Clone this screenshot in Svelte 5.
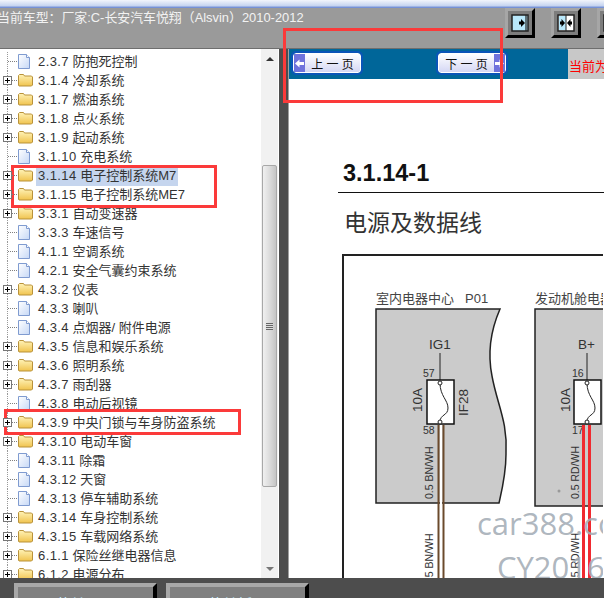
<script lang="ts">
  const rows = [
    { n: '2.3.7', t: '防抱死控制', doc: true },
    { n: '3.1.4', t: '冷却系统' },
    { n: '3.1.7', t: '燃油系统' },
    { n: '3.1.8', t: '点火系统' },
    { n: '3.1.9', t: '起动系统' },
    { n: '3.1.10', t: '充电系统', doc: true },
    { n: '3.1.14', t: '电子控制系统M7', sel: true },
    { n: '3.1.15', t: '电子控制系统ME7' },
    { n: '3.3.1', t: '自动变速器' },
    { n: '3.3.3', t: '车速信号', doc: true },
    { n: '4.1.1', t: '空调系统', doc: true },
    { n: '4.2.1', t: '安全气囊约束系统', doc: true },
    { n: '4.3.2', t: '仪表' },
    { n: '4.3.3', t: '喇叭', doc: true },
    { n: '4.3.4', t: '点烟器/ 附件电源', doc: true },
    { n: '4.3.5', t: '信息和娱乐系统' },
    { n: '4.3.6', t: '照明系统' },
    { n: '4.3.7', t: '雨刮器' },
    { n: '4.3.8', t: '电动后视镜', doc: true },
    { n: '4.3.9', t: '中央门锁与车身防盗系统' },
    { n: '4.3.10', t: '电动车窗' },
    { n: '4.3.11', t: '除霜', doc: true },
    { n: '4.3.12', t: '天窗', doc: true },
    { n: '4.3.13', t: '停车辅助系统', doc: true },
    { n: '4.3.14', t: '车身控制系统' },
    { n: '4.3.15', t: '车载网络系统' },
    { n: '6.1.1', t: '保险丝继电器信息' },
    { n: '6.1.2', t: '电源分布' },
  ];
</script>

<div class="screen">
  <div class="titlebar"></div>

  <header class="toolbar">
    <div class="model">当前车型：厂家:C-长安汽车悦翔（Alsvin）2010-2012</div>
    <div class="tools">
      <div class="tool">
        <svg width="18" height="18" viewBox="0 0 18 18">
          <rect x="1" y="1" width="16" height="16" fill="#b9e8fb" stroke="#222" stroke-width="1.5" />
          <path d="M15 1v16" stroke="#222" stroke-width="1.2" />
          <path d="M8 7.500h2V5l4 4-4 4v-2.500H8z" fill="#000" />
        </svg>
      </div>
      <div class="tool">
        <svg width="18" height="18" viewBox="0 0 18 18">
          <rect x="1" y="1" width="16" height="16" fill="#fff" stroke="#222" stroke-width="1.5" />
          <rect x="2" y="2" width="7" height="14" fill="#b9e8fb" />
          <path d="M9 1v16" stroke="#222" stroke-width="1" />
          <path d="M3 7.500h1.500V5L8 9l-3.500 4v-2.500H3zM15 7.500h-1.500V5L10 9l3.500 4v-2.500H15z" fill="#000" />
        </svg>
      </div>
      <div class="tool">
        <svg width="18" height="18" viewBox="0 0 18 18">
          <rect x="1" y="1" width="16" height="16" fill="#fff" stroke="#222" stroke-width="1.5" />
          <path d="M3.500 1v16" stroke="#222" stroke-width="1.2" />
          <path d="M11 7.500H9V5L5 9l4 4v-2.500h2z" fill="#000" />
        </svg>
      </div>
    </div>
  </header>

  <main class="body">
    <aside class="tree">
      <ul class="rows">
        {#each rows as row}
          <li class="row">
            <span class="gutter">
              {#if !row.doc}
                <span class="plus"></span>
              {/if}
              <span class="dots"></span>
            </span>
            {#if row.doc}
              <svg class="ico doc" width="14" height="15" viewBox="0 0 14 15">
                <defs>
                  <linearGradient id="docfill" x1="0" y1="0" x2="1" y2="1">
                    <stop offset="0" stop-color="#ffffff" />
                    <stop offset="1" stop-color="#c6d8f6" />
                  </linearGradient>
                </defs>
                <path d="M.5 .5h8l3 3v11h-11z" fill="url(#docfill)" stroke="#7f9bd0" />
                <path d="M8.500 .5v3h3" fill="#fff" stroke="#7f9bd0" />
              </svg>
            {:else}
              <svg class="ico folder" width="16" height="13" viewBox="0 0 16 13">
                <defs>
                  <linearGradient id="foldfill" x1="0" y1="0" x2="0" y2="1">
                    <stop offset="0" stop-color="#fff3b8" />
                    <stop offset="1" stop-color="#f0c34e" />
                  </linearGradient>
                </defs>
                <path d="M.5 3V1.500l1-1h4l1 1.500h7l1 1v8l-1 1H1l-.5-1z" fill="url(#foldfill)" stroke="#b9923a" />
              </svg>
            {/if}
            <span class="label" class:sel={row.sel}><span class="num">{row.n}</span> {row.t}</span>
          </li>
        {/each}
      </ul>
      <div class="scrollbar">
        <span class="arrow up"></span>
        <div class="thumb">
          <span class="grip"></span>
        </div>
        <span class="arrow down"></span>
      </div>
    </aside>

    <section class="viewer">
      <div class="pager">
        <div class="pbtn prev">
          <span class="cap">
            <svg width="9" height="9" viewBox="0 0 9 9"><path d="M0 4.500 4.500 .5v2.500H9v3H4.500v2.500z" fill="#fff" /></svg>
          </span>
          <span class="ptext">上 一 页</span>
        </div>
        <div class="pbtn next">
          <span class="ptext">下 一 页</span>
          <span class="cap">
            <svg width="9" height="9" viewBox="0 0 9 9"><path d="M9 4.500 4.500 .5v2.500H0v3h4.500v2.500z" fill="#fff" /></svg>
          </span>
        </div>
        <div class="current">当前为</div>
      </div>
      <div class="sheet">
        <h1>3.1.14-1</h1>
        <h2>电源及数据线</h2>
        <svg class="diagram" width="261" height="330" viewBox="0 0 261 330">
          <rect x="1" y="1" width="300" height="350" fill="#fff" stroke="#222" stroke-width="2" />

          <text x="34" y="49" class="cap1">室内电器中心</text>
          <text x="123" y="49" class="cap1">P01</text>
          <path d="M34 55H158C148 78 146 102 150 122C155 150 166 168 164 200C164 220 160 236 157 249H34z" fill="#cbcbcb" stroke="#222" stroke-width="1.5" />
          <text x="87" y="95" class="pin">IG1</text>
          <path d="M98 99v27" stroke="#222" />
          <text x="81" y="123" class="small">57</text>
          <rect x="85" y="126" width="27" height="44" fill="#fff" stroke="#111" stroke-width="1.5" />
          <path d="M98 129C98 142 106 146 106 154C106 162 98 160 98 168" fill="none" stroke="#222" />
          <circle cx="98" cy="129" r="2" fill="#fff" stroke="#222" />
          <circle cx="98" cy="168" r="2" fill="#fff" stroke="#222" />
          <text x="0" y="0" class="pin" transform="translate(80 158) rotate(-90)">10A</text>
          <text x="0" y="0" class="pin" transform="translate(126 162) rotate(-90)">IF28</text>
          <text x="81" y="180" class="small">58</text>
          <path d="M96.500 171V330" stroke="#6b4a2c" stroke-width="2" />
          <path d="M99 171V330" stroke="#fff" stroke-width="2" />
          <path d="M101.500 171V330" stroke="#6b4a2c" stroke-width="2" />
          <text x="0" y="0" class="small" transform="translate(91 245) rotate(-90)">0.5 BN/WH</text>
          <text x="0" y="0" class="small" transform="translate(91 332) rotate(-90)">0.5 BN/WH</text>

          <text x="193" y="49" class="cap1">发动机舱电器中心</text>
          <rect x="193" y="55" width="100" height="197" fill="#cbcbcb" stroke="#222" stroke-width="1.5" />
          <circle cx="217" cy="237" r="1.500" fill="#999" />
          <text x="236" y="95" class="pin">B+</text>
          <path d="M245 99v27" stroke="#222" />
          <text x="230" y="123" class="small">16</text>
          <rect x="232" y="126" width="27" height="44" fill="#fff" stroke="#111" stroke-width="1.5" />
          <path d="M245 129C245 142 253 146 253 154C253 162 245 160 245 168" fill="none" stroke="#222" />
          <circle cx="245" cy="129" r="2" fill="#fff" stroke="#222" />
          <circle cx="245" cy="168" r="2" fill="#fff" stroke="#222" />
          <text x="0" y="0" class="pin" transform="translate(228 158) rotate(-90)">10A</text>
          <text x="230" y="180" class="small">17</text>
          <path d="M241.500 171V330" stroke="#f02a30" stroke-width="3" />
          <path d="M247.500 171V330" stroke="#f02a30" stroke-width="3" />
          <text x="0" y="0" class="small" transform="translate(237 245) rotate(-90)">0.5 RD/WH</text>
          <text x="0" y="0" class="small" transform="translate(237 332) rotate(-90)">0.5 RD/WH</text>

          <text x="135" y="281" class="mark">car388.com</text>
          <text x="155" y="325" class="mark">CY2016</text>
        </svg>
      </div>
    </section>
  </main>

  <footer class="footer">
    <div class="fbtn">菜单回开</div>
    <div class="fbtn">菜单折开</div>
  </footer>

  <!-- hand drawn red marks on the screenshot -->
  <div class="mark-box m1"></div>
  <div class="mark-box m2"></div>
  <div class="mark-box m3"></div>
</div>

<style>
  :global(body) {
    margin: 0;
    overflow: hidden;
    background: #4d4d4d;
  }

  .screen {
    position: relative;
    width: 604px;
    height: 598px;
    display: flex;
    flex-direction: column;
    overflow: hidden;
    font-family: 'Liberation Sans', 'Noto Sans CJK SC', sans-serif;
  }

  .titlebar {
    height: 8px;
    flex: none;
    background: linear-gradient(#f2f5fb, #c7d5f0 70%, #5f7fcf);
  }

  .toolbar {
    height: 40px;
    flex: none;
    display: flex;
    justify-content: space-between;
    background: #9a9a9a;
    border-bottom: 1px solid #6e6e6e;
  }

  .model {
    margin-left: -3px;
    padding-top: 1px;
    font-size: 12.9px;
    line-height: 17px;
    color: #f2f2f2;
    white-space: nowrap;
  }

  .tools {
    display: flex;
    gap: 16px;
    margin-right: -23px;
  }

  .tool {
    width: 30px;
    height: 30px;
    box-sizing: border-box;
    display: flex;
    align-items: center;
    justify-content: center;
    background: #7d7d7d;
    border-style: solid;
    border-width: 3px;
    border-color: #a6a6a6 #000 #000 #a6a6a6;
  }

  .body {
    flex: 1;
    min-height: 0;
    display: flex;
    gap: 9px;
    background: #4d4d4d;
  }

  .tree {
    width: 279px;
    flex: none;
    display: flex;
    background: #fff;
    overflow: hidden;
  }

  .rows {
    list-style: none;
    margin: 0;
    padding: 3px 0 0;
    flex: 1;
    min-width: 0;
  }

  .row {
    position: relative;
    height: 19px;
    display: flex;
    align-items: center;
    white-space: nowrap;
  }

  /* tree connector running down through every row */
  .row::before {
    content: '';
    position: absolute;
    left: 7px;
    top: 0;
    bottom: 0;
    border-left: 1px dotted #999;
  }

  .gutter {
    position: relative;
    width: 18px;
    flex: none;
    display: flex;
    align-items: center;
    padding-left: 3px;
    box-sizing: border-box;
    z-index: 1;
  }

  .dots {
    flex: 1;
    min-width: 0;
    margin-right: 1px;
    border-top: 1px dotted #808080;
    margin-left: 5px;
  }

  .plus {
    flex: none;
    width: 9px;
    height: 9px;
    box-sizing: border-box;
    border: 1px solid #777;
    background: linear-gradient(#000, #000) center / 5px 1px no-repeat,
      linear-gradient(#000, #000) center / 1px 5px no-repeat, #fff;
  }

  .plus + .dots {
    margin-left: 0;
  }

  .ico {
    flex: none;
  }

  .doc {
    margin-right: 6px;
  }

  .folder {
    margin-right: 4px;
  }

  .label {
    padding: 0 2px;
    margin-left: -2px;
    font-size: 13px;
    line-height: 18px;
    color: #333;
  }

  .num {
    letter-spacing: 0.4px;
  }

  .sel {
    line-height: 20px;
    background: #c5d5ee;
  }

  .scrollbar {
    width: 17px;
    flex: none;
    margin-right: 1px;
    display: flex;
    flex-direction: column;
    align-items: center;
    background: #f1f1f1;
  }

  .arrow {
    width: 0;
    height: 0;
    border-left: 4px solid transparent;
    border-right: 4px solid transparent;
  }

  .up {
    margin-top: 8px;
    border-bottom: 4px solid #333;
  }

  .down {
    margin-bottom: 7px;
    border-top: 4px solid #777;
  }

  .thumb {
    width: 15px;
    height: 322px;
    margin-top: 104px;
    margin-bottom: auto;
    box-sizing: border-box;
    border: 1px solid #a8a8a8;
    border-radius: 2px;
    background: linear-gradient(90deg, #f0f0f0, #dcdcdc 50%, #c4c4c4);
    display: flex;
    align-items: center;
    justify-content: center;
  }

  .grip {
    width: 7px;
    height: 7px;
    background: repeating-linear-gradient(#666 0 1px, #ddd 1px 2px);
  }

  .viewer {
    flex: 1;
    min-width: 0;
    display: flex;
    flex-direction: column;
    background: #fff;
    border-left: 1px solid #a0a0a0;
  }

  .pager {
    height: 30px;
    flex: none;
    display: flex;
    align-items: center;
    background: #006699;
    position: relative;
  }

  .pbtn {
    position: absolute;
    top: 4px;
    height: 20px;
    width: 68px;
    box-sizing: border-box;
    display: flex;
    align-items: center;
    border: 1px solid #fff;
    border-radius: 3px;
    outline: 2px solid #0a55b8;
    background: linear-gradient(#fff, #d4d7f4);
    font-size: 12px;
    color: #111;
    white-space: nowrap;
  }

  .prev {
    left: 4px;
  }

  .next {
    left: 149px;
  }

  .cap {
    width: 11px;
    height: 100%;
    flex: none;
    display: flex;
    align-items: center;
    justify-content: center;
    background: #6f73dc;
  }

  .ptext {
    flex: 1;
    text-align: center;
  }

  .current {
    margin-left: auto;
    width: 36px;
    height: 30px;
    background: #c8c8c8;
    color: #f00;
    font-size: 13px;
    line-height: 35px;
    padding-left: 1px;
    box-sizing: border-box;
    white-space: nowrap;
    overflow: hidden;
  }

  .sheet {
    flex: 1;
    min-height: 0;
    padding-left: 49px;
    overflow: hidden;
    background: #fff;
  }

  h1 {
    margin: 80px 0 5px 5px;
    font-size: 23.5px;
    line-height: 28px;
    font-weight: bold;
    color: #111;
  }

  h2 {
    margin: 0 0 17px;
    padding: 16px 0 0 6px;
    border-top: 1px solid #111;
    font-size: 23px;
    line-height: 28px;
    font-weight: 400;
    color: #333;
  }

  .diagram {
    display: block;
    margin-left: 4px;
  }

  .cap1 {
    font-size: 13px;
    fill: #444;
  }

  .pin {
    font-size: 13.5px;
    fill: #333;
  }

  .small {
    font-size: 10.5px;
    fill: #333;
  }

  .mark {
    font-family: 'Open Sans', sans-serif;
    font-size: 31px;
    fill: #a4adb6;
    fill-opacity: 0.9;
  }

  .footer {
    height: 20px;
    flex: none;
    display: flex;
    gap: 9px;
    padding: 5px 0 0 14px;
    box-sizing: border-box;
    background: #4d4d4d;
    overflow: hidden;
  }

  .fbtn {
    width: 143px;
    height: 34px;
    flex: none;
    box-sizing: border-box;
    padding-top: 6px;
    border-style: solid;
    border-width: 4px;
    border-color: #a8a8a8 #000 #000 #a8a8a8;
    background: #808080;
    color: #bfe8ff;
    font-size: 15px;
    text-align: center;
  }

  .mark-box {
    position: absolute;
    box-sizing: border-box;
    border: 3px solid #fb3a3a;
    pointer-events: none;
  }

  .m1 {
    left: 283px;
    top: 28px;
    width: 220px;
    height: 75px;
  }

  .m2 {
    left: 11px;
    top: 165px;
    width: 206px;
    height: 43px;
  }

  .m3 {
    left: 4px;
    top: 409px;
    width: 237px;
    height: 26px;
  }
</style>
